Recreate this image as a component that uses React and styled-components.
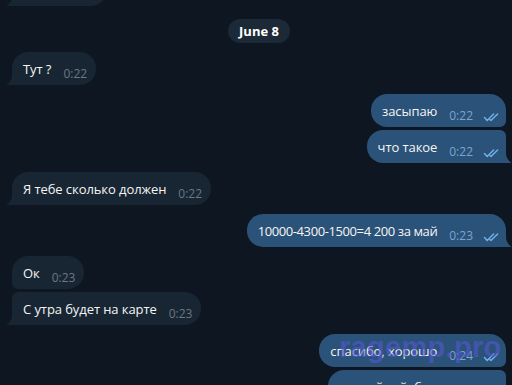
import React from 'react';
import styled, { createGlobalStyle } from 'styled-components';

const GlobalStyle = createGlobalStyle`
  html, body {
    margin: 0;
    padding: 0;
    background: #0e1621;
    height: 100%;
    overflow: hidden;
  }
  body {
    font-family: "Open Sans", "Noto Sans", sans-serif;
    color: #f5f5f5;
  }
`;

const Screen = styled.div`
  position: relative;
  width: 512px;
  height: 385px;
  overflow: hidden;
  background: #0e1621;
`;

const History = styled.div`
  display: flex;
  flex-direction: column;
  margin-top: -27px;
  padding: 0 6px 0 12px;
`;

const Row = styled.div`
  display: flex;
  justify-content: ${p => (p.out ? 'flex-end' : 'flex-start')};
  margin-top: ${p => p.gap}px;
`;

const DateRow = styled.div`
  display: flex;
  justify-content: center;
  margin-top: 13px;
`;

const DatePill = styled.div`
  height: 24px;
  padding: 0 11px;
  border-radius: 12px;
  background: #1c2936;
  font-size: 13px;
  font-weight: 700;
  line-height: 24px;
  color: #ffffff;
`;

const R = 16;
const S = 6;

const Bubble = styled.div`
  position: relative;
  display: flex;
  align-items: flex-start;
  height: 33px;
  box-sizing: border-box;
  padding: 0 ${p => (p.out ? 6 : 9)}px 0 11px;
  background: ${p => (p.out ? '#2b5278' : '#182533')};
  border-radius: ${p =>
    p.out
      ? `${R}px ${p.first ? R : S}px ${p.last ? 0 : S}px ${R}px`
      : `${p.first ? R : S}px ${R}px ${R}px ${p.last ? 0 : S}px`};
`;

const Text = styled.span`
  padding-top: 8px;
  font-size: 13px;
  line-height: 18px;
  letter-spacing: ${p => (p.tight ? '-0.4px' : '-0.08px')};
  white-space: nowrap;
`;

const Time = styled.span`
  margin-top: 14px;
  margin-left: 12px;
  font-size: 12px;
  line-height: 16px;
  color: ${p => (p.out ? '#7aa5cf' : '#6c7883')};
`;

const Checks = styled.svg`
  margin-top: 19px;
  margin-left: 10px;
  flex: none;
`;

const TailSvg = styled.svg`
  position: absolute;
  bottom: 0;
  ${p => (p.out ? 'right: -6px;' : 'left: -6px;')}
`;

const Watermark = styled.div`
  position: absolute;
  left: 339px;
  top: 333px;
  font-family: "Liberation Sans", Arial, sans-serif;
  font-weight: 700;
  font-size: 29px;
  line-height: 29px;
  color: rgba(84, 88, 210, 0.6);
  letter-spacing: 0.3px;
  pointer-events: none;
`;

function Tail({ out }) {
  return (
    <TailSvg out={out} width="6" height="10" viewBox="0 0 6 10">
      {out ? (
        <path d="M0 0 C0 5 3 8.5 6 10 H0 Z" fill="#2b5278" />
      ) : (
        <path d="M6 0 C6 5 3 8.5 0 10 H6 Z" fill="#182533" />
      )}
    </TailSvg>
  );
}

function DoubleCheck() {
  return (
    <Checks width="17" height="9" viewBox="0 0 17 9">
      <g fill="none" stroke="#6fb0e6" strokeWidth="1.5" strokeLinecap="round" strokeLinejoin="round">
        <path d="M1.5 4.6 L4.2 7.5 L10.6 1" />
        <path d="M7 6.5 L8 7.5 L14.6 1" />
      </g>
    </Checks>
  );
}

const messages = [
  { text: 'Ладно', time: '0:21', out: false, gap: 0, first: true, last: true },
  'date',
  { text: 'Тут ?', time: '0:22', out: false, gap: 9, first: true, last: true },
  { text: 'засыпаю', time: '0:22', out: true, gap: 9, first: true, last: false },
  { text: 'что такое', time: '0:22', out: true, gap: 3, first: false, last: true },
  { text: 'Я тебе сколько должен', time: '0:22', out: false, gap: 9, first: true, last: true },
  { text: '10000-4300-1500=4 200 за май', time: '0:23', out: true, gap: 9, first: true, last: true, tight: true },
  { text: 'Ок', time: '0:23', out: false, gap: 9, first: true, last: false },
  { text: 'С утра будет на карте', time: '0:23', out: false, gap: 3, first: false, last: true },
  { text: 'спасибо, хорошо', time: '0:24', out: true, gap: 9, first: true, last: false },
  { text: 'спокойной, бро', time: '0:24', out: true, gap: 3, first: false, last: true },
];

export default function App() {
  return (
    <>
      <GlobalStyle />
      <Screen>
        <History>
          {messages.map((m, i) =>
            m === 'date' ? (
              <DateRow key={i}>
                <DatePill>June 8</DatePill>
              </DateRow>
            ) : (
              <Row key={i} out={m.out} gap={m.gap}>
                <Bubble out={m.out} first={m.first} last={m.last}>
                  <Text tight={m.tight}>{m.text}</Text>
                  <Time out={m.out}>{m.time}</Time>
                  {m.out && <DoubleCheck />}
                  {m.last && <Tail out={m.out} />}
                </Bubble>
              </Row>
            )
          )}
        </History>
        <Watermark>ragemp.pro</Watermark>
      </Screen>
    </>
  );
}
